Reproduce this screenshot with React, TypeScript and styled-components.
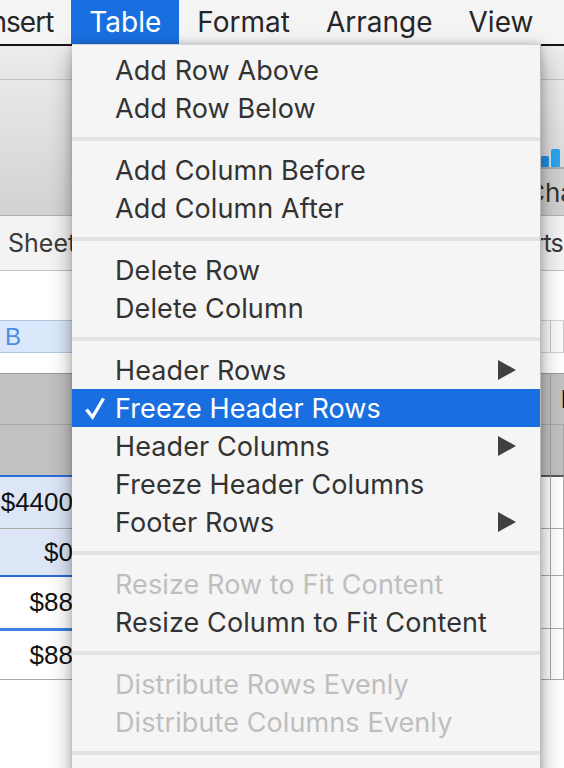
import React from "react";
import styled, { createGlobalStyle } from "styled-components";

const GlobalStyle = createGlobalStyle`
  html, body {
    margin: 0;
    padding: 0;
    overflow: hidden;
    background: #ffffff;
  }
  body {
    font-family: "Inter", "Liberation Sans", sans-serif;
  }
`;

const Screen = styled.div`
  position: relative;
  width: 564px;
  height: 768px;
  overflow: hidden;
  display: flex;
  flex-direction: column;
  background: #ffffff;
`;

const MenuBar = styled.div`
  flex: none;
  height: 44px;
  display: flex;
  align-items: stretch;
  margin-left: -34px;
  background: #f4f4f4;
  border-bottom: 2px solid #141414;
`;

const MenuTitle = styled.div<{ $active?: boolean; $tight?: boolean }>`
  display: flex;
  align-items: center;
  padding: 0 18px;
  font-size: 28px;
  letter-spacing: ${(p) => (p.$tight ? "-1px" : "0")};
  color: ${(p) => (p.$active ? "#ffffff" : "#262626")};
  background: ${(p) => (p.$active ? "#1a6fe0" : "transparent")};
  white-space: nowrap;
`;

const TitleBar = styled.div`
  flex: none;
  height: 33px;
  background: linear-gradient(#ededed, #e5e5e5);
  border-bottom: 1px solid #c4c4c4;
`;

const Toolbar = styled.div`
  flex: none;
  height: 135px;
  display: flex;
  justify-content: flex-end;
  align-items: flex-end;
  background: linear-gradient(#e8e8e8, #d2d2d2);
  border-bottom: 1px solid #b2b2b2;
`;

const ToolGroup = styled.div`
  width: 80px;
  margin-right: -53px;
  display: flex;
  flex-direction: column;
`;

const ToolIcon = styled.svg`
  display: block;
  margin-left: 4px;
`;

const ToolLabel = styled.div`
  height: 46px;
  display: flex;
  align-items: center;
  text-indent: -11px;
  background: #d0d0d0;
  border-top: 2px solid #ababab;
  font-size: 26px;
  color: #333333;
  white-space: nowrap;
`;

const TabBar = styled.div`
  flex: none;
  height: 54px;
  display: flex;
  align-items: center;
  justify-content: space-between;
  padding: 0 0 0 8px;
  background: #f3f3f3;
  border-bottom: 1px solid #c2c2c2;
`;

const Tab = styled.div<{ $edge?: boolean }>`
  font-size: 25px;
  color: #3a3a3a;
  white-space: nowrap;
  letter-spacing: ${(p) => (p.$edge ? "-0.8px" : "0")};
  margin-right: ${(p) => (p.$edge ? "1px" : "0")};
`;

const Canvas = styled.div`
  flex: 1;
  display: flex;
  flex-direction: column;
  padding-top: 49px;
  background: #ffffff;
`;

const Row = styled.div<{ $height: number }>`
  display: grid;
  grid-template-columns: 80px 471px 1fr;
  height: ${(p) => p.$height}px;
`;

const ColLetter = styled.div<{ $selected?: boolean }>`
  display: flex;
  align-items: center;
  padding-left: 5px;
  font-family: "Liberation Sans", sans-serif;
  font-size: 24px;
  color: #4a8fe6;
  background: ${(p) => (p.$selected ? "#dbe8fb" : "#fbfbfb")};
  border-top: 1px solid ${(p) => (p.$selected ? "#b5c6e0" : "#d2d2d2")};
  border-bottom: 1px solid ${(p) => (p.$selected ? "#b5c6e0" : "#d2d2d2")};
  border-right: 1px solid #c8c8c8;
`;

const HeaderGap = styled.div`
  height: 20px;
`;

const HeaderCell = styled.div<{ $first?: boolean }>`
  display: flex;
  align-items: center;
  padding-left: 10px;
  font-family: "Liberation Sans", sans-serif;
  font-weight: bold;
  font-size: 26px;
  color: #111111;
  background: #c0c1c0;
  border-top: 1px solid ${(p) => (p.$first ? "#9a9a9a" : "#a8a8a8")};
  border-right: 1px solid #a4a4a4;
  white-space: nowrap;
`;

const BodyCell = styled.div<{ $tint?: boolean; $top?: string }>`
  display: flex;
  align-items: center;
  justify-content: flex-end;
  padding-right: 6px;
  font-family: "Liberation Sans", sans-serif;
  font-size: 26px;
  color: #111111;
  background: ${(p) => (p.$tint ? "#dde6f7" : "#ffffff")};
  border-top: ${(p) => p.$top ?? "1px solid #a9a9a9"};
  border-right: 1px solid #a9a9a9;
`;

const TableEnd = styled.div`
  border-top: 1px solid #a9a9a9;
`;

const Menu = styled.div`
  position: absolute;
  top: 44px;
  left: 72px;
  width: 468px;
  padding-top: 6px;
  background: #f5f5f5;
  border-top: 1px solid #d2d2d2;
  border-right: 1px solid #bcbcbc;
  box-shadow: 0 10px 22px rgba(0, 0, 0, 0.32), 0 0 8px rgba(0, 0, 0, 0.18);
  font-family: "Inter", "Liberation Sans", sans-serif;
`;

const Item = styled.div<{ $active?: boolean; $disabled?: boolean }>`
  position: relative;
  height: 38px;
  display: flex;
  align-items: center;
  padding-left: 43px;
  font-size: 27px;
  letter-spacing: 0.1px;
  color: ${(p) => (p.$active ? "#ffffff" : p.$disabled ? "#bebebe" : "#333333")};
  background: ${(p) => (p.$active ? "#1a6fe0" : "transparent")};
  white-space: nowrap;
`;

const Check = styled.svg`
  position: absolute;
  left: 12px;
  top: 7px;
`;

const Arrow = styled.svg`
  position: absolute;
  right: 24px;
  top: 9px;
`;

const Separator = styled.div`
  height: 4px;
  margin: 10px 0;
  background: #e3e3e3;
`;

type MenuEntry = {
  label: string;
  sub?: boolean;
  checked?: boolean;
  active?: boolean;
  disabled?: boolean;
};

const groups: MenuEntry[][] = [
  [{ label: "Add Row Above" }, { label: "Add Row Below" }],
  [{ label: "Add Column Before" }, { label: "Add Column After" }],
  [{ label: "Delete Row" }, { label: "Delete Column" }],
  [
    { label: "Header Rows", sub: true },
    { label: "Freeze Header Rows", checked: true, active: true },
    { label: "Header Columns", sub: true },
    { label: "Freeze Header Columns" },
    { label: "Footer Rows", sub: true },
  ],
  [
    { label: "Resize Row to Fit Content", disabled: true },
    { label: "Resize Column to Fit Content" },
  ],
  [
    { label: "Distribute Rows Evenly", disabled: true },
    { label: "Distribute Columns Evenly", disabled: true },
  ],
  [{ label: "Unhide All Rows", disabled: true }],
];

const bodyRows = [
  { value: "$4400", tint: true, height: 53, top: "2px solid #2b6bd6" },
  { value: "$0", tint: true, height: 47, top: "1px solid #a9a9a9" },
  { value: "$88", tint: false, height: 53, top: "2px solid #2b6bd6" },
  { value: "$88", tint: false, height: 51, top: "3px solid #3d82e0" },
];

const App: React.FC = () => {
  return (
    <Screen>
      <GlobalStyle />
      <MenuBar>
        <MenuTitle $tight>Insert</MenuTitle>
        <MenuTitle $active>Table</MenuTitle>
        <MenuTitle>Format</MenuTitle>
        <MenuTitle>Arrange</MenuTitle>
        <MenuTitle>View</MenuTitle>
      </MenuBar>
      <TitleBar />
      <Toolbar>
        <ToolGroup>
          <ToolIcon width="24" height="18" viewBox="0 0 24 18">
            <rect x="0" y="7" width="8" height="11" rx="1.5" fill="#1f8fe3" />
            <rect x="10" y="0" width="9" height="18" rx="1.5" fill="#2aa4ee" />
          </ToolIcon>
          <ToolLabel>Chart</ToolLabel>
        </ToolGroup>
      </Toolbar>
      <TabBar>
        <Tab>Sheet 1</Tab>
        <Tab $edge>Charts</Tab>
      </TabBar>
      <Canvas>
        <Row $height={33}>
          <ColLetter $selected>B</ColLetter>
          <ColLetter />
          <ColLetter />
        </Row>
        <HeaderGap />
        <Row $height={51}>
          <HeaderCell $first />
          <HeaderCell $first />
          <HeaderCell $first>Balance</HeaderCell>
        </Row>
        <Row $height={51}>
          <HeaderCell />
          <HeaderCell />
          <HeaderCell />
        </Row>
        {bodyRows.map((r, i) => (
          <Row key={i} $height={r.height}>
            <BodyCell $tint={r.tint} $top={r.top}>
              {r.value}
            </BodyCell>
            <BodyCell $top={i === 0 ? "2px solid #5a5a5a" : undefined} />
            <BodyCell $top={i === 0 ? "2px solid #5a5a5a" : undefined} />
          </Row>
        ))}
        <TableEnd />
      </Canvas>

      <Menu>
        {groups.map((group, gi) => (
          <React.Fragment key={gi}>
            {gi > 0 && <Separator />}
            {group.map((item) => (
              <Item key={item.label} $active={item.active} $disabled={item.disabled}>
                {item.checked && (
                  <Check width="22" height="24" viewBox="0 0 22 24">
                    <path d="M2.5 13.5 L8.5 21 L19.5 2.5" fill="none" stroke="#ffffff" strokeWidth="3.4" />
                  </Check>
                )}
                {item.label}
                {item.sub && (
                  <Arrow width="18" height="20" viewBox="0 0 18 20">
                    <polygon points="0,0 18,10 0,20" fill="#404040" />
                  </Arrow>
                )}
              </Item>
            ))}
          </React.Fragment>
        ))}
      </Menu>
    </Screen>
  );
};

export default App;
